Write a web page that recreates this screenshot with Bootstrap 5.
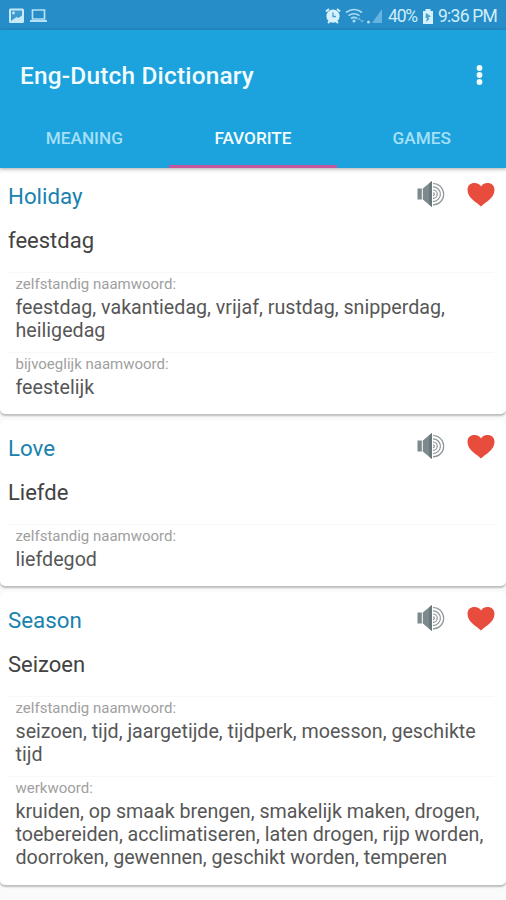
<!DOCTYPE html>
<html lang="en">
<head>
<meta charset="utf-8">
<meta name="viewport" content="width=device-width, initial-scale=1">
<title>Eng-Dutch Dictionary</title>
<link href="https://cdn.jsdelivr.net/npm/bootstrap@5.3.0/dist/css/bootstrap.min.css" rel="stylesheet">
<style>
body{font-family:Roboto,"Liberation Sans",sans-serif;background:#fafafa;height:900px;overflow:hidden}
svg{display:block;flex:none}
.status{height:30px;background:#268dc8;color:#cfeefb;font-size:17.5px;line-height:30px;padding:2px 9px 0 8px}
.pct{width:31px;letter-spacing:-1.15px;margin-left:4px}
.bat{margin:0 4px 0 3px}
.clock{width:59px;letter-spacing:-.75px;white-space:nowrap}
.appbar{background:#1ca2dc;height:138px;box-shadow:0 1px 4px rgba(0,0,0,.35);z-index:2}
.brand{height:90px;padding:1px 22px 0 20px}
.brand h1{font-size:24.4px;font-weight:500;letter-spacing:.2px;color:#f2fcff}
.tabs .nav-link{height:48px;line-height:37px;padding:0;font-size:17.2px;font-weight:500;color:#a5e0f7;border-radius:0;border-bottom:3px solid transparent}
.tabs .nav-link.active{color:#f2fcff;border-bottom-color:#c4569f}
.entry{border:0;border-radius:5px;box-shadow:0 2px 2px rgba(0,0,0,.25);margin-bottom:6px;padding:0 8px}
.entry-a{height:246px}.entry-b{height:166px}.entry-c{height:293px}
.word{height:52px;padding:0 3px 0 0}
.word h2{font-size:22.3px;line-height:28px;color:#1782ae;padding-top:3px;font-weight:400}
.speaker{margin-right:20px}
.meaning{font-size:22px;line-height:42px;height:52px;color:#424242}
.sense{border-top:1px solid #f8f8f8;margin:0 4px 0 0;padding:2px 0 10px 7.5px}
.kind{font-size:15px;line-height:18px;color:#a0a0a0}
.sense p{font-size:19.67px;line-height:23px;color:#575757;margin:3px 0 0;white-space:nowrap}
</style>
</head>
<body>
<svg width="0" height="0" class="position-absolute">
<symbol id="speaker" viewBox="0 0 30 28"><path fill="#7d898c" d="M.5 8.500h4.300v11H.5zM5.800 8.500 15 1v26l-9.200-7.500z"/><path fill="#6b787b" d="M12 3.500 15 1v26l-3-2.500z"/><g fill="none" stroke="#8c9699" stroke-width="1.200"><path d="M16 3.500a10.700 10.700 0 0 1 0 21.400M16 6.800a7.400 7.400 0 0 1 0 14.800M16 10a4.200 4.200 0 0 1 0 8.400M16 12.800a1.400 1.400 0 0 1 0 2.800"/></g></symbol>
<symbol id="heart" viewBox="0 0 28 25"><path fill="#e74c3c" d="M14 24.500C10 20.500.5 16 .5 8 .5 3.500 3.500 1 7.500 1 10.500 1 13 2.400 14 4.600 15 2.400 17.500 1 20.500 1c4 0 7 2.500 7 7 0 8-9.500 12.500-13.500 16.500z"/></symbol>
</svg>

<div class="status d-flex align-items-center justify-content-between">
  <div class="d-flex align-items-center">
    <svg width="17" height="16" viewBox="0 0 17 16"><rect x="1" y="0.500" width="15" height="14.500" rx="1.500" fill="#c7eafa"/><path fill="#3d9bcf" d="M3 2.500h11v5l-3.500 2.500-2-1-5.500 4z"/><circle cx="5.500" cy="5" r="1.400" fill="#c7eafa"/></svg>
    <svg class="ms-1" width="19" height="16" viewBox="0 0 19 16"><path fill="none" stroke="#b5e2f6" stroke-width="1.700" d="M3.500 2h12v9h-12z"/><path fill="#b5e2f6" d="M1 12h17v2H1z"/></svg>
  </div>
  <div class="d-flex align-items-center">
    <svg width="16" height="16" viewBox="0 0 16 16"><circle cx="8" cy="8.200" r="6.600" fill="#d5f1fc"/><path stroke="#d5f1fc" stroke-width="2" d="M1 3.500 4 1M15 3.500 12 1M3 15l2-2M13 15l-2-2"/><path fill="none" stroke="#4a9fcd" stroke-width="1.300" d="M8 4.500v4h3"/></svg>
    <svg width="20" height="18" viewBox="0 0 20 18" class="ms-1"><g fill="none" stroke="#aadcf3" stroke-width="1.600"><path d="M1 5.500q8-6 16 0M3.500 8.700q5.500-4 11 0M6 11.500q3-2.200 6 0"/></g><circle cx="9" cy="14" r="1.500" fill="#aadcf3"/><path fill="#65b4df" d="m12 13 2-3 2 3zm3 0h4l-2 3z"/></svg>
    <svg width="19" height="16" viewBox="0 0 19 16"><path fill="#65b4df" d="M17 1v14H7z"/><circle cx="3.500" cy="14" r="1.500" fill="#aadcf3"/></svg>
    <span class="pct">40%</span>
    <svg class="bat" width="12" height="17" viewBox="0 0 12 17"><path fill="#d5f1fc" d="M3.500 1h5v2H11v13H1V3h2.500z"/><path fill="#4a9fcd" d="m4 5 5 3.500-3 1 1.500 1.500L4 14l1-3.500-1.500-1z"/></svg>
    <span class="clock">9:36 PM</span>
  </div>
</div>

<header class="appbar position-relative">
  <div class="brand d-flex align-items-center justify-content-between">
    <h1 class="m-0">Eng-Dutch Dictionary</h1>
    <svg width="9" height="24" viewBox="0 0 9 24" fill="#f2fcff"><circle cx="4.500" cy="4" r="2.900"/><circle cx="4.500" cy="11" r="2.900"/><circle cx="4.500" cy="18" r="2.900"/></svg>
  </div>
  <nav class="tabs nav nav-fill row g-0 text-center">
    <a class="nav-link col-4" href="#">MEANING</a>
    <a class="nav-link active col-4" href="#">FAVORITE</a>
    <a class="nav-link col-4" href="#">GAMES</a>
  </nav>
</header>

<main>
  <article class="card entry entry-a">
    <div class="word d-flex align-items-center">
      <h2 class="m-0 flex-grow-1">Holiday</h2>
      <svg class="speaker" width="30" height="28"><use href="#speaker"/></svg>
      <svg width="28" height="25"><use href="#heart"/></svg>
    </div>
    <div class="meaning">feestdag</div>
    <section class="sense"><div class="kind">zelfstandig naamwoord:</div><p>feestdag, vakantiedag, vrijaf, rustdag, snipperdag,<br>heiligedag</p></section>
    <section class="sense"><div class="kind">bijvoeglijk naamwoord:</div><p>feestelijk</p></section>
  </article>
  <article class="card entry entry-b">
    <div class="word d-flex align-items-center">
      <h2 class="m-0 flex-grow-1">Love</h2>
      <svg class="speaker" width="30" height="28"><use href="#speaker"/></svg>
      <svg width="28" height="25"><use href="#heart"/></svg>
    </div>
    <div class="meaning">Liefde</div>
    <section class="sense"><div class="kind">zelfstandig naamwoord:</div><p>liefdegod</p></section>
  </article>
  <article class="card entry entry-c">
    <div class="word d-flex align-items-center">
      <h2 class="m-0 flex-grow-1">Season</h2>
      <svg class="speaker" width="30" height="28"><use href="#speaker"/></svg>
      <svg width="28" height="25"><use href="#heart"/></svg>
    </div>
    <div class="meaning">Seizoen</div>
    <section class="sense"><div class="kind">zelfstandig naamwoord:</div><p>seizoen, tijd, jaargetijde, tijdperk, moesson, geschikte<br>tijd</p></section>
    <section class="sense"><div class="kind">werkwoord:</div><p>kruiden, op smaak brengen, smakelijk maken, drogen,<br>toebereiden, acclimatiseren, laten drogen, rijp worden,<br>doorroken, gewennen, geschikt worden, temperen</p></section>
  </article>
</main>
<script src="https://cdn.jsdelivr.net/npm/bootstrap@5.3.0/dist/js/bootstrap.bundle.min.js"></script>
</body>
</html>
